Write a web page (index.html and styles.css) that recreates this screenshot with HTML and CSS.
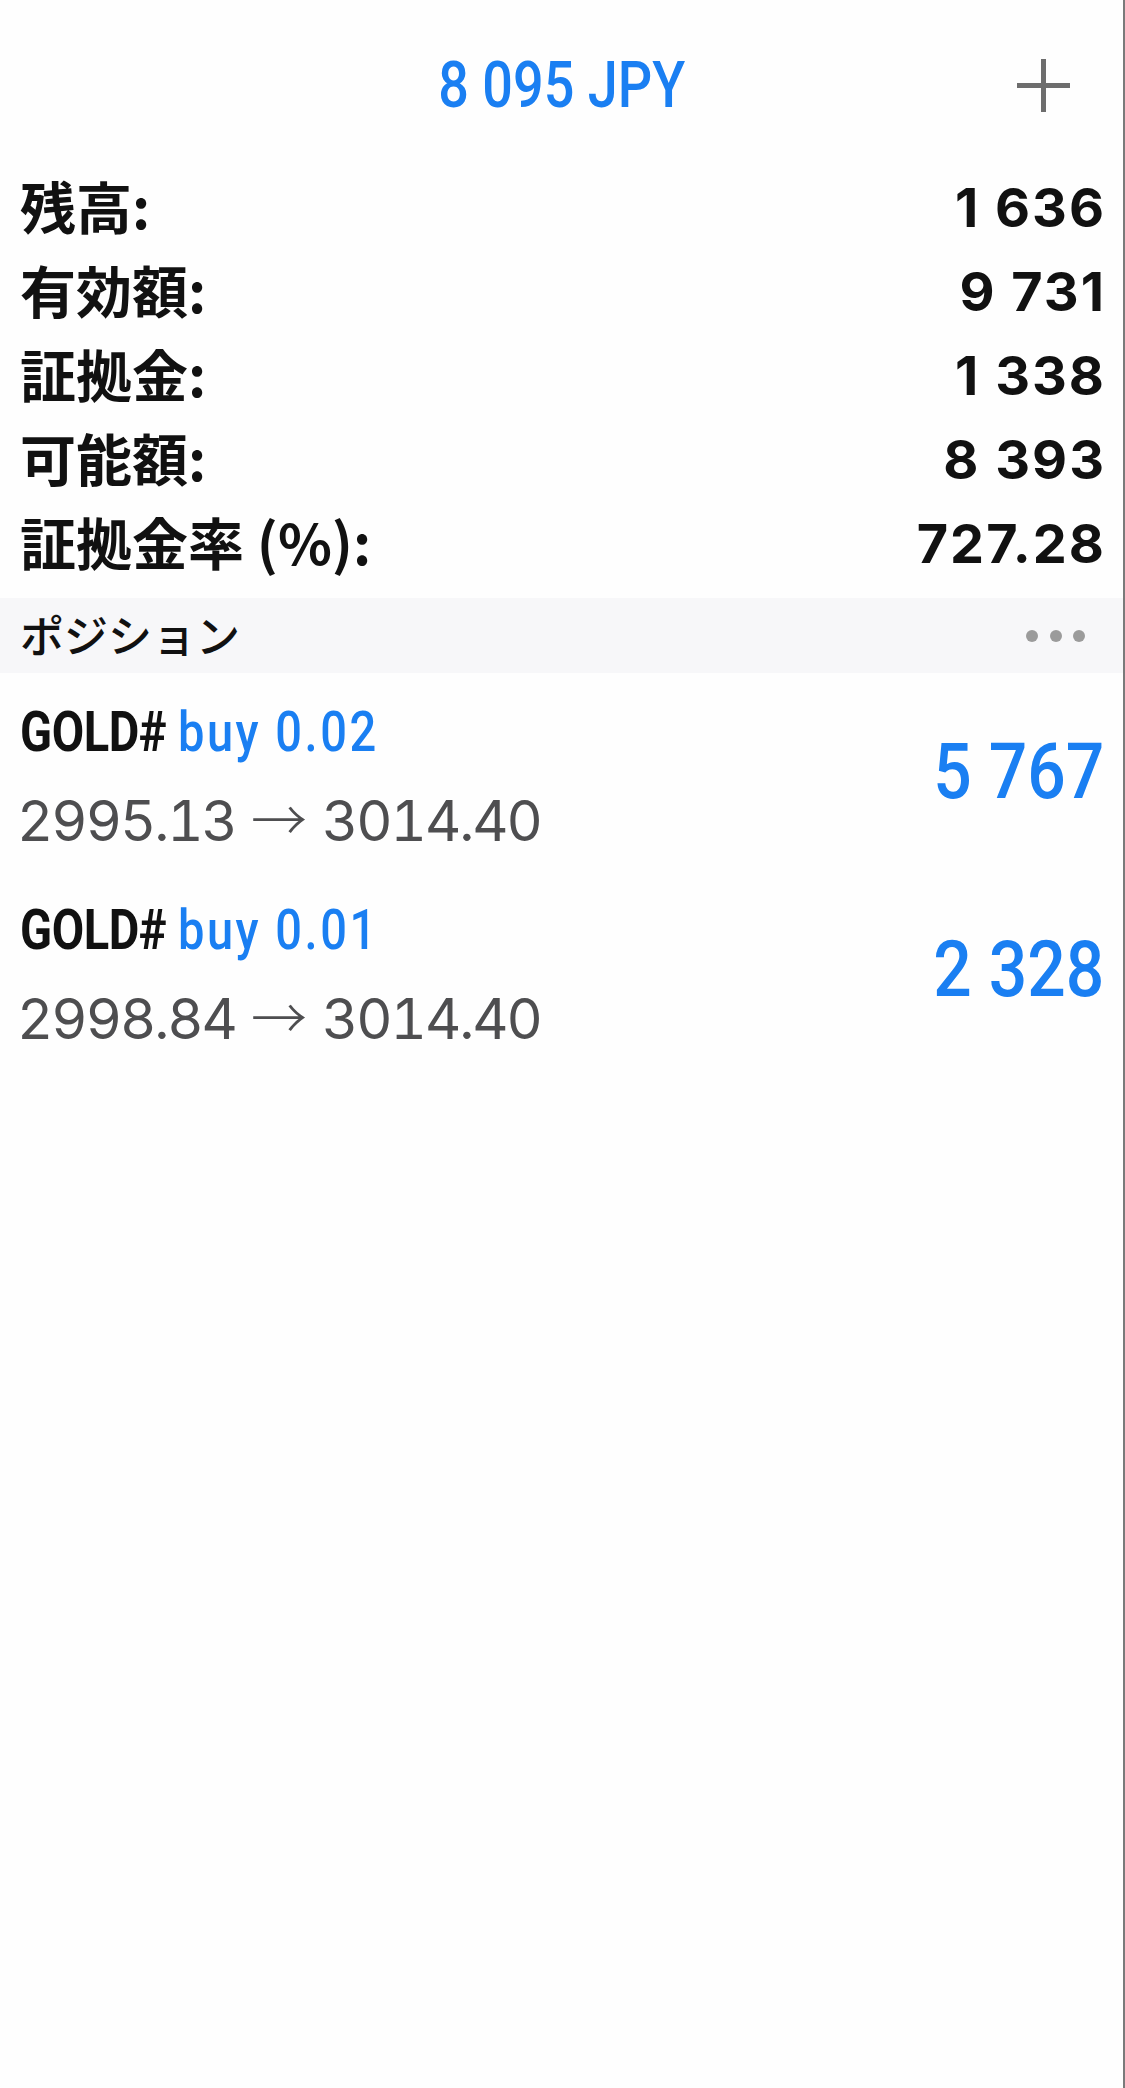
FILE: index.html
```html
<!DOCTYPE html>
<html lang="ja">
<head>
<meta charset="utf-8">
<title>口座</title>
<link rel="stylesheet" href="styles.css">
</head>
<body>
<div class="screen">
  <header class="topbar">
    <div class="title">8 095 JPY</div>
    <div class="add" aria-label="追加">
      <svg width="53" height="53" viewBox="0 0 53 53"><path d="M26.5 0V53M0 26.5H53" stroke="#6d6d6d" stroke-width="5" fill="none"/></svg>
    </div>
  </header>

  <section class="summary">
    <div class="row"><span class="label">残高:</span><span class="value">1 636</span></div>
    <div class="row"><span class="label">有効額:</span><span class="value">9 731</span></div>
    <div class="row"><span class="label">証拠金:</span><span class="value">1 338</span></div>
    <div class="row"><span class="label">可能額:</span><span class="value">8 393</span></div>
    <div class="row"><span class="label">証拠金率 (%):</span><span class="value">727.28</span></div>
  </section>

  <div class="section-head">
    <span class="head-title">ポジション</span>
    <span class="dots"><i></i><i></i><i></i></span>
  </div>

  <section class="positions">
    <div class="pos">
      <div class="pos-info">
        <div class="pos-title"><span class="sym">GOLD#</span> <span class="side">buy 0.02</span></div>
        <div class="pos-prices">2995.13 <span class="arrow">→</span> 3014.40</div>
      </div>
      <div class="pos-profit">5 767</div>
    </div>
    <div class="pos">
      <div class="pos-info">
        <div class="pos-title"><span class="sym">GOLD#</span> <span class="side">buy 0.01</span></div>
        <div class="pos-prices">2998.84 <span class="arrow">→</span> 3014.40</div>
      </div>
      <div class="pos-profit">2 328</div>
    </div>
  </section>
</div>
</body>
</html>
```

FILE: styles.css
```css
html, body {
  margin: 0;
  padding: 0;
  background: #fefefe;
}

.screen {
  width: 1125px;
  min-height: 2088px;
  box-sizing: border-box;
  border-right: 2px solid #7a7a7a;
  background: #fefefe;
}

.topbar {
  height: 166px;
  box-sizing: border-box;
  padding-top: 4px;
  display: grid;
  grid-template-columns: 1fr auto 1fr;
  align-items: center;
}

.title {
  grid-column: 2;
  font-family: Roboto, "Noto Sans", sans-serif;
  font-weight: 500;
  font-size: 65px;
  line-height: 1;
  color: #1a7ff2;
  white-space: nowrap;
  transform: scaleX(0.83);
}

.add {
  grid-column: 3;
  justify-self: end;
  margin-right: 53px;
  width: 53px;
  height: 53px;
}

.add svg {
  display: block;
}

.row {
  height: 84px;
  display: flex;
  align-items: center;
  justify-content: space-between;
  padding: 0 19px 0 20px;
}

.label {
  font-family: "Noto Sans CJK JP", sans-serif;
  font-weight: 700;
  font-size: 56px;
  line-height: 1;
  color: #111;
  margin-bottom: 6px;
}

.value {
  font-family: Inter, "Liberation Sans", sans-serif;
  font-weight: 700;
  font-size: 54px;
  line-height: 1;
  letter-spacing: 2px;
  margin-right: -2px;
  color: #111;
}

.section-head {
  margin-top: 12px;
  height: 75px;
  background: #f7f7f9;
  display: flex;
  align-items: center;
  justify-content: space-between;
  padding: 0 38px 0 20px;
}

.head-title {
  font-family: "Noto Sans CJK JP", sans-serif;
  font-weight: 500;
  font-size: 44px;
  line-height: 1;
  color: #111;
  margin-bottom: 4px;
}

.dots {
  display: flex;
  gap: 11.5px;
}

.dots i {
  display: block;
  width: 12px;
  height: 12px;
  border-radius: 50%;
  background: #9b9b9b;
}

.pos {
  height: 198px;
  display: flex;
  justify-content: space-between;
  padding: 0 19px 0 20px;
}

.pos-info {
  padding-top: 17px;
  display: flex;
  flex-direction: column;
}

.pos-title {
  height: 84px;
  line-height: 84px;
  font-family: Roboto, "Noto Sans", sans-serif;
  font-size: 56px;
  white-space: nowrap;
  transform: scaleX(0.84);
  transform-origin: left center;
}

.sym {
  font-weight: 700;
  color: #111;
  letter-spacing: -0.5px;
}

.side {
  font-weight: 500;
  color: #1a7ff2;
  letter-spacing: 3px;
}

.pos-prices {
  height: 86px;
  line-height: 86px;
  margin-left: -3px;
  font-family: Inter, "Liberation Sans", sans-serif;
  font-weight: 400;
  font-size: 56px;
  font-variant-numeric: tabular-nums;
  letter-spacing: -2px;
  color: #4e4e50;
  white-space: nowrap;
}

.arrow {
  font-family: "Noto Sans CJK JP", sans-serif;
  font-weight: 300;
  letter-spacing: 0;
  margin: 0 2px;
}

.pos-profit {
  align-self: center;
  font-family: Roboto, "Noto Sans", sans-serif;
  font-weight: 500;
  font-size: 77px;
  line-height: 1;
  color: #1a7ff2;
  white-space: nowrap;
  transform: scaleX(0.88);
  transform-origin: right center;
}
```
